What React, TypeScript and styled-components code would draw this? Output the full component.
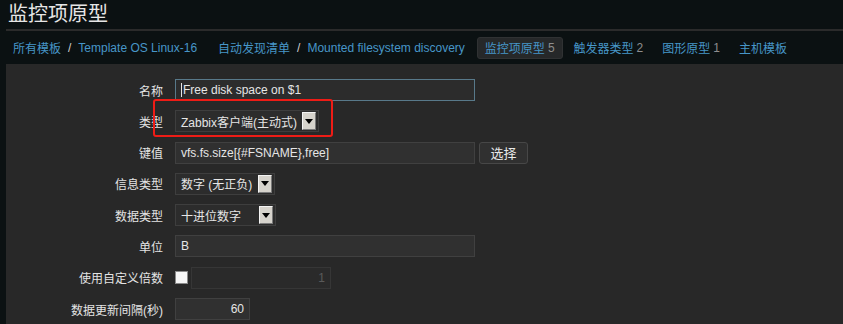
import React from 'react'
import styled, { createGlobalStyle } from 'styled-components'

const GlobalStyle = createGlobalStyle`
  body {
    margin: 0;
    background: #0b1112;
    font-family: "Liberation Sans", "Noto Sans CJK SC", sans-serif;
    font-size: 12px;
    color: #e2e2e2;
  }
`

const Page = styled.div`
  display: flex;
  flex-direction: column;
  min-height: 100vh;
  padding-left: 6px;
  box-sizing: border-box;
`

const Title = styled.h1`
  margin: 0;
  height: 29px;
  line-height: 29px;
  padding-left: 2px;
  font-size: 20px;
  font-weight: normal;
  color: #e6e6e6;
`

const Nav = styled.nav`
  display: flex;
  align-items: center;
  height: 35px;
  padding-left: 7px;
  border-top: 2px solid #2b2b2b;
  box-sizing: border-box;
`

const Crumbs = styled.div`
  display: flex;
  align-items: center;
  margin-right: ${p => p.$gap}px;
`

const Link = styled.a`
  color: #4796c8;
  text-decoration: none;
  white-space: nowrap;
`

const Sep = styled.span`
  margin: 0 7px;
  color: #d0d0d0;
`

const Tab = styled.a`
  display: flex;
  align-items: center;
  height: 20px;
  padding: 0 7px;
  margin-right: 3px;
  border-radius: 3px;
  color: #4796c8;
  white-space: nowrap;
  background: ${p => (p.$active ? '#262829' : 'transparent')};
  border: 1px solid ${p => (p.$active ? '#303233' : 'transparent')};
`

const Count = styled.span`
  margin-left: 3px;
  color: #8e8e8e;
`

const Panel = styled.main`
  flex: 1;
  background: #282828;
  padding-top: 15px;
`

const Form = styled.div`
  display: grid;
  grid-template-columns: 157px 1fr;
  grid-auto-rows: 22px;
  column-gap: 12px;
  row-gap: 9.3px;
`

const Label = styled.label`
  align-self: center;
  text-align: right;
  white-space: nowrap;
  color: #e4e4e4;
`

const Field = styled.div`
  position: relative;
  display: flex;
  align-items: center;
  gap: ${p => p.$gap ?? 4}px;
`

const Input = styled.div`
  box-sizing: border-box;
  width: ${p => p.$w}px;
  height: 22px;
  line-height: 20px;
  padding: 0 5px;
  text-align: ${p => (p.$right ? 'right' : 'left')};
  background: ${p => (p.$disabled ? '#2a2a2a' : p.$focus ? '#2c2c2c' : '#303030')};
  border: 1px solid ${p => (p.$focus ? '#58798a' : p.$disabled ? '#363636' : '#404040')};
  color: ${p => (p.$disabled ? '#5a5a5a' : '#e6e6e6')};
  white-space: nowrap;
  overflow: hidden;
`

const Caret = styled.span`
  display: inline-block;
  width: 1px;
  height: 14px;
  margin-right: 1px;
  vertical-align: -3px;
  background: #e6e6e6;
`

const Select = styled.div`
  box-sizing: border-box;
  display: flex;
  align-items: center;
  justify-content: space-between;
  width: ${p => p.$w}px;
  height: 22px;
  padding: 0 2px 0 5px;
  background: #2c2c2c;
  border: 1px solid #3e3e3e;
  color: #e6e6e6;
  white-space: nowrap;
`

const Arrow = styled.span`
  box-sizing: border-box;
  display: flex;
  align-items: center;
  justify-content: center;
  width: 14px;
  height: 18px;
  background: #d6d3cc;
  border: 1px solid;
  border-color: #f4f4f4 #7a7a7a #7a7a7a #f4f4f4;
`

const Button = styled.button`
  box-sizing: border-box;
  width: 49px;
  height: 22px;
  padding: 0;
  background: #303030;
  border: 1px solid #474747;
  border-radius: 3px;
  color: #e8e8e8;
  font-family: inherit;
  font-size: 13px;
`

const Check = styled.span`
  box-sizing: border-box;
  width: 13px;
  height: 13px;
  background: #f6f6f6;
  border: 1px solid #8a8a8a;
`

const Highlight = styled.span`
  position: absolute;
  left: -22px;
  top: -11px;
  width: 180px;
  height: 38px;
  box-sizing: border-box;
  border: 2px solid #ee1c16;
  border-radius: 3px;
  pointer-events: none;
`

const Dropdown: React.FC<{ w: number; value: string }> = ({ w, value }) => (
  <Select $w={w}>
    <span>{value}</span>
    <Arrow>
      <svg width="8" height="5" viewBox="0 0 8 5">
        <polygon points="0,0 8,0 4,5" fill="#000" />
      </svg>
    </Arrow>
  </Select>
)

export default function App() {
  return (
    <>
      <GlobalStyle />
      <Page>
        <Title>监控项原型</Title>
        <Nav>
          <Crumbs $gap={21}>
            <Link>所有模板</Link>
            <Sep>/</Sep>
            <Link>Template OS Linux-16</Link>
          </Crumbs>
          <Crumbs $gap={12}>
            <Link>自动发现清单</Link>
            <Sep>/</Sep>
            <Link>Mounted filesystem discovery</Link>
          </Crumbs>
          <Tab $active>监控项原型<Count>5</Count></Tab>
          <Tab>触发器类型<Count>2</Count></Tab>
          <Tab>图形原型<Count>1</Count></Tab>
          <Tab>主机模板</Tab>
        </Nav>
        <Panel>
          <Form>
            <Label>名称</Label>
            <Field>
              <Input $w={300} $focus><Caret />Free disk space on $1</Input>
            </Field>

            <Label>类型</Label>
            <Field>
              <Dropdown w={144} value="Zabbix客户端(主动式)" />
              <Highlight />
            </Field>

            <Label>键值</Label>
            <Field>
              <Input $w={300}>vfs.fs.size[{'{#FSNAME}'},free]</Input>
              <Button>选择</Button>
            </Field>

            <Label>信息类型</Label>
            <Field>
              <Dropdown w={100} value="数字 (无正负)" />
            </Field>

            <Label>数据类型</Label>
            <Field>
              <Dropdown w={101} value="十进位数字" />
            </Field>

            <Label>单位</Label>
            <Field>
              <Input $w={300}>B</Input>
            </Field>

            <Label>使用自定义倍数</Label>
            <Field $gap={3}>
              <Check />
              <Input $w={140} $right $disabled>1</Input>
            </Field>

            <Label>数据更新间隔(秒)</Label>
            <Field>
              <Input $w={75} $right>60</Input>
            </Field>
          </Form>
        </Panel>
      </Page>
    </>
  )
}
